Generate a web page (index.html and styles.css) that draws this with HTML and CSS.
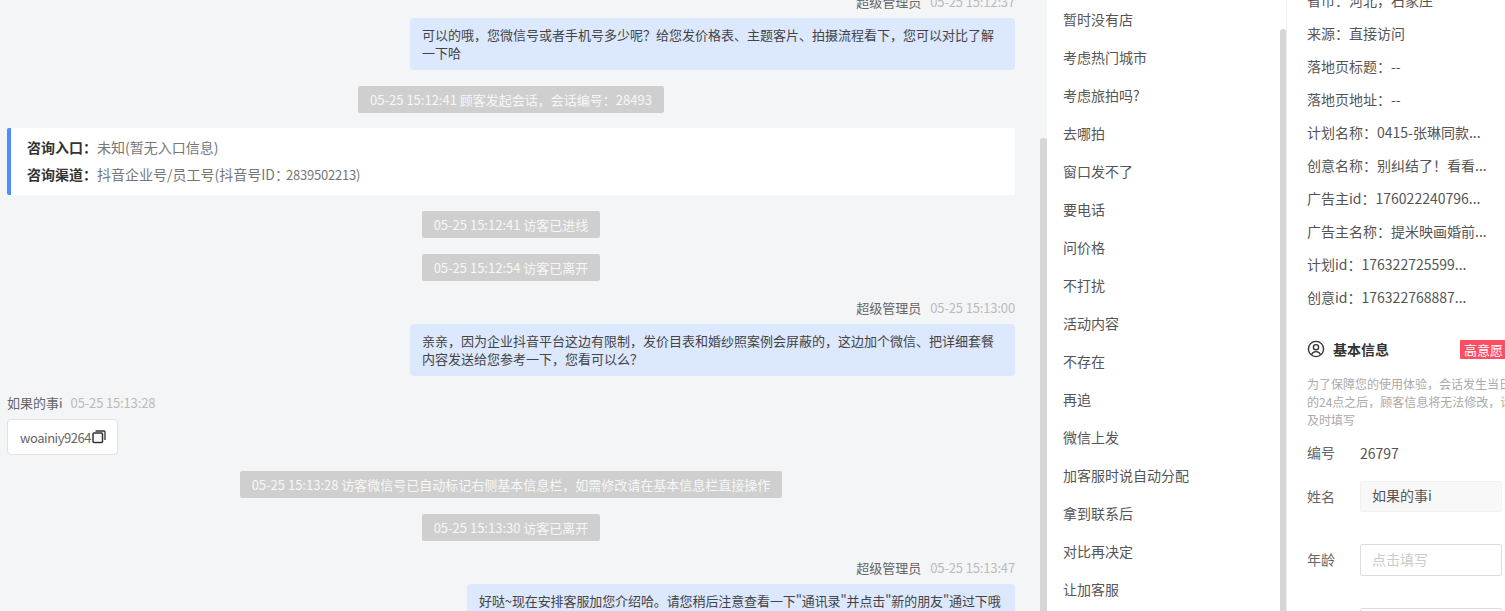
FILE: index.html
```html
<!DOCTYPE html>
<html lang="zh-CN">
<head>
<meta charset="utf-8">
<title>会话</title>
<link rel="stylesheet" href="styles.css">
</head>
<body>
<div class="app">
  <main class="chat">
    <div class="stream">
      <section class="group right">
        <div class="head"><span class="who">超级管理员</span><span class="time">05-25 15:12:37</span></div>
        <div class="bubble">可以的哦，您微信号或者手机号多少呢？给您发价格表、主题客片、拍摄流程看下，您可以对比了解一下哈</div>
      </section>
      <div class="pill">05-25 15:12:41 顾客发起会话，会话编号：28493</div>
      <div class="entry">
        <p><b>咨询入口：</b>未知(暂无入口信息)</p>
        <p><b>咨询渠道：</b>抖音企业号/员工号(抖音号ID：<span class="num">2839502213)</span></p>
      </div>
      <div class="pill">05-25 15:12:41 访客已进线</div>
      <div class="pill">05-25 15:12:54 访客已离开</div>
      <section class="group right">
        <div class="head"><span class="who">超级管理员</span><span class="time">05-25 15:13:00</span></div>
        <div class="bubble">亲亲，因为企业抖音平台这边有限制，发价目表和婚纱照案例会屏蔽的，这边加个微信、把详细套餐内容发送给您参考一下，您看可以么？</div>
      </section>
      <section class="group left">
        <div class="head"><span class="who">如果的事i</span><span class="time">05-25 15:13:28</span></div>
        <div class="wechat"><span class="wx">woainiy9264</span><svg class="copy" viewBox="0 0 14 14" width="14" height="14" aria-hidden="true"><rect x="1" y="3" width="9.5" height="9.5" rx="1" fill="none" stroke="#333" stroke-width="1.5"/><path d="M3.500 1h8.500a1 1 0 0 1 1 1v8" fill="none" stroke="#333" stroke-width="1.300"/></svg></div>
      </section>
      <div class="pill">05-25 15:13:28 访客微信号已自动标记右侧基本信息栏，如需修改请在基本信息栏直接操作</div>
      <div class="pill">05-25 15:13:30 访客已离开</div>
      <section class="group right">
        <div class="head"><span class="who">超级管理员</span><span class="time">05-25 15:13:47</span></div>
        <div class="bubble narrow">好哒~现在安排客服加您介绍哈。请您稍后注意查看一下"通讯录"并点击"新的朋友"通过下哦</div>
      </section>
    </div>
    <div class="bar bar-chat"></div>
  </main>
  <nav class="phrases">
    <ul>
      <li>暂时没有店</li>
      <li>考虑热门城市</li>
      <li>考虑旅拍吗?</li>
      <li>去哪拍</li>
      <li>窗口发不了</li>
      <li>要电话</li>
      <li>问价格</li>
      <li>不打扰</li>
      <li>活动内容</li>
      <li>不存在</li>
      <li>再追</li>
      <li>微信上发</li>
      <li>加客服时说自动分配</li>
      <li>拿到联系后</li>
      <li>对比再决定</li>
      <li>让加客服</li>
    </ul>
    <div class="bar bar-phrases"></div>
  </nav>
  <aside class="info">
    <ul class="meta">
      <li>省市：河北，石家庄</li>
      <li>来源：直接访问</li>
      <li>落地页标题：--</li>
      <li>落地页地址：--</li>
      <li>计划名称：0415-张琳同款...</li>
      <li>创意名称：别纠结了！看看...</li>
      <li>广告主id：176022240796...</li>
      <li>广告主名称：提米映画婚前...</li>
      <li>计划id：176322725599...</li>
      <li>创意id：176322768887...</li>
    </ul>
    <div class="title">
      <svg class="user" viewBox="0 0 18 18" width="18" height="18" aria-hidden="true"><circle cx="9" cy="9" r="7.6" fill="none" stroke="#333" stroke-width="1.4"/><circle cx="9" cy="7.2" r="2.6" fill="none" stroke="#333" stroke-width="1.4"/><path d="M4.600 14.600c.6-2 2.400-3 4.400-3s3.800 1 4.400 3" fill="none" stroke="#333" stroke-width="1.4"/></svg>
      <h2>基本信息</h2>
      <span class="tag">高意愿</span>
    </div>
    <p class="note">为了保障您的使用体验，会话发生当日的24点之后，顾客信息将无法修改，请及时填写</p>
    <div class="field plain"><label>编号</label><span>26797</span></div>
    <div class="field filled"><label>姓名</label><div class="box">如果的事i</div></div>
    <div class="field empty"><label>年龄</label><div class="box">点击填写</div></div>
    <div class="field empty"><label></label><div class="box"></div></div>
  </aside>
</div>
</body>
</html>
```
FILE: styles.css
```css
* { box-sizing: border-box; }
html, body { margin: 0; height: 100%; overflow: hidden; }
body {
  font-family: "Noto Sans CJK SC", "Liberation Sans", sans-serif;
  font-size: 13px;
  color: #555;
  background: #fff;
}
ul { list-style: none; margin: 0; padding: 0; }
p { margin: 0; }

.app { display: flex; height: 611px; overflow: hidden; }

.chat {
  position: relative;
  width: 1047px;
  flex: none;
  background: #f4f5f7;
  overflow: hidden;
  padding: 0 32px 0 7px;
}
.stream { display: flex; flex-direction: column; gap: 16px; margin-top: -9px; }

.bar { position: absolute; right: 0; bottom: 0; background: #d6d6d6; border-radius: 3px 3px 0 0; }
.bar-chat { top: 138px; width: 7px; }
.bar-phrases { top: 29px; width: 6px; }

.group { display: flex; flex-direction: column; margin-top: 2px; }
.group.right { align-items: flex-end; }
.group.left { align-items: flex-start; }
.head { height: 18px; line-height: 18px; margin-bottom: 7px; color: #666; display: flex; gap: 9px; }
.left .head { gap: 8px; }
.time { color: #bbb; letter-spacing: -0.15px; }

.bubble {
  width: 605px;
  background: #dce8fd;
  border-radius: 4px;
  padding: 8px 12px;
  line-height: 18px;
  color: #444;
}
.bubble.narrow { width: 548px; letter-spacing: -0.1px; }

.pill {
  align-self: center;
  height: 27px;
  line-height: 27px;
  padding: 0 12px;
  border-radius: 2px;
  background: #cfcfcf;
  color: #f7f7f7;
  white-space: nowrap;
}

.entry {
  margin-top: -1px;
  height: 67px;
  background: #fff;
  border-left: 4px solid #4c8dff;
  border-radius: 2px;
  padding: 6px 16px 0;
  font-size: 14px;
  line-height: 27px;
  color: #777;
}
.entry b { color: #333; font-weight: 700; }
.num { font-size: 13px; letter-spacing: -0.2px; margin-left: -3px; }

.wechat {
  display: flex;
  align-items: center;
  height: 36px;
  width: 111px;
  padding-left: 12px;
  background: #fff;
  border: 1px solid #e2e2e2;
  border-radius: 4px;
  color: #666;
}
.wx { letter-spacing: -0.45px; margin-right: 1px; }
.copy { flex: none; }

.phrases {
  position: relative;
  width: 240px;
  flex: none;
  padding: 0 0 0 16px;
  background: #fff;
  border-right: 1px solid #eee;
  font-size: 14px;
}
.phrases li { height: 38px; line-height: 38px; color: #555; }

.info {
  flex: 1;
  min-width: 0;
  overflow: hidden;
  padding: 0 0 0 20px;
  background: #fff;
  font-size: 14px;
}
.meta { margin-top: -16px; }
.meta li { height: 33px; line-height: 33px; white-space: nowrap; }

.title { display: flex; align-items: center; height: 20px; margin-top: 25px; width: 240px; }
.user { flex: none; margin-right: 8px; }
.title h2 { margin: 0; font-size: 14px; font-weight: 700; color: #333; line-height: 20px; }
.tag {
  margin-left: 71px;
  height: 19px;
  line-height: 19px;
  padding: 0 4px;
  flex: none;
  font-size: 13px;
  background: #ff4d63;
  color: #fff;
  border-radius: 1px;
}

.note { width: 208px; margin-top: 16px; font-size: 12px; line-height: 18px; color: #aaa; }

.field { display: flex; align-items: center; }
.field label { width: 53px; flex: none; color: #666; padding-bottom: 2px; }
.field.plain { margin-top: 15px; height: 18px; line-height: 16px; }
.field.filled { margin-top: 19px; }
.field.empty { margin-top: 32px; }
.box {
  width: 142px;
  height: 32px;
  line-height: 28px;
  padding: 0 11px;
  border-radius: 2px;
  border: 1px solid #ddd;
  color: #ccc;
}
.filled .box { height: 31px; line-height: 27px; background: #f8f8f8; border-color: #f2f2f2; color: #555; }
```
